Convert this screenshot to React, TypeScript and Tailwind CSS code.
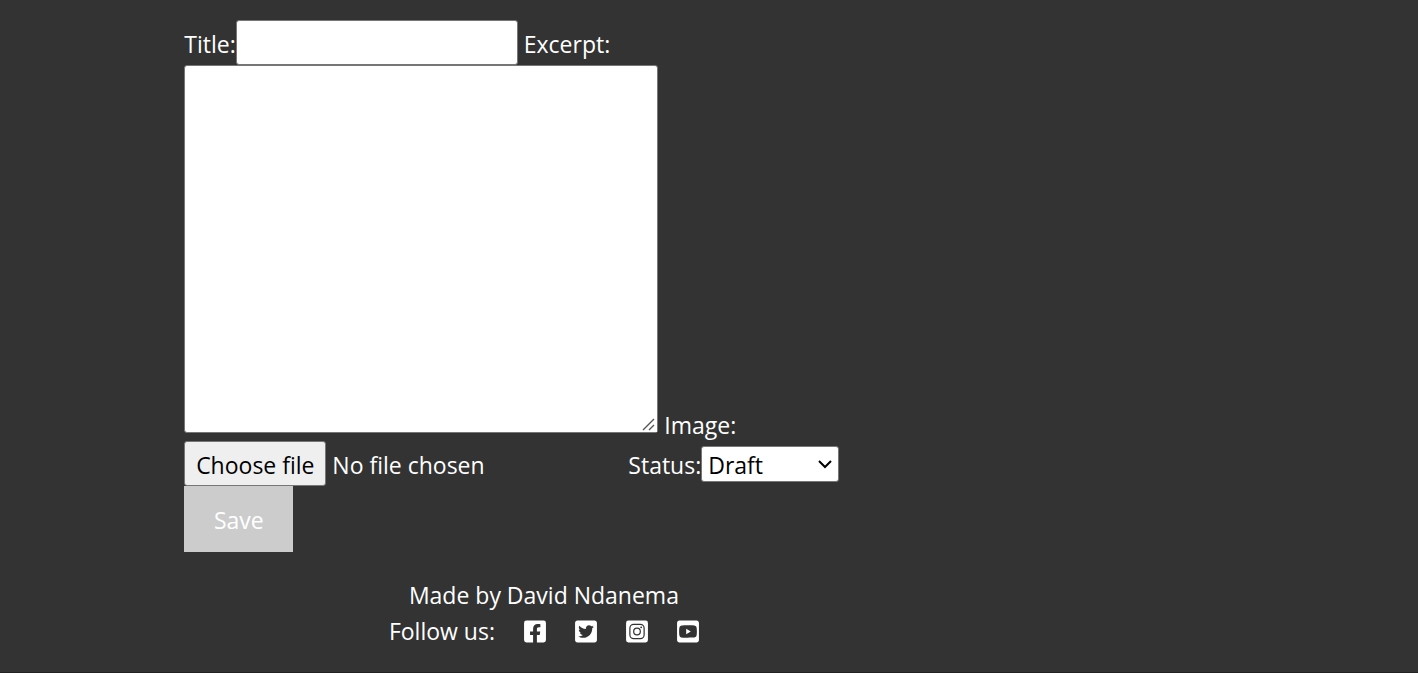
import React, { useState } from "react";
import {
  FaFacebookSquare,
  FaTwitterSquare,
  FaYoutubeSquare,
} from "react-icons/fa";

function InstagramSquare({ className }: { className?: string }) {
  return (
    <svg viewBox="0 0 448 512" className={className} aria-hidden="true">
      <rect y="32" width="448" height="448" rx="48" fill="#fff" />
      <g fill="none" stroke="#333" strokeWidth="25">
        <rect x="78" y="110" width="292" height="292" rx="78" />
        <circle cx="224" cy="256" r="68" />
      </g>
      <circle cx="309" cy="171" r="19" fill="#333" />
    </svg>
  );
}

const socials = [
  { name: "Facebook", Icon: FaFacebookSquare },
  { name: "Twitter", Icon: FaTwitterSquare },
  { name: "Instagram", Icon: InstagramSquare },
  { name: "YouTube", Icon: FaYoutubeSquare },
];

export default function App() {
  const [fileName, setFileName] = useState("No file chosen");

  return (
    <div className="min-h-screen border-b border-[#222] bg-[#333] pt-5 font-['Segoe_UI','Open_Sans',sans-serif] text-[23px] leading-9 text-white">
      <main className="ml-[13%] w-[51%] min-w-[660px]">
        <form onSubmit={(e) => e.preventDefault()}>
          <div className="flex items-center">
            <label htmlFor="title" className="pt-0.5">Title:</label>
            <input
              id="title"
              type="text"
              className="h-[45px] w-[282px] rounded-[3px] border border-[#767676] bg-white px-1 text-black"
            />
            <label htmlFor="excerpt" className="pt-0.5 pl-1.5">Excerpt:</label>
          </div>
          <div className="flex items-end">
            <div className="relative flex">
              <textarea
                id="excerpt"
                className="h-[368px] w-[474px] rounded-[3px] border border-[#767676] bg-white p-1 text-black"
              />
              <svg
                viewBox="0 0 16 16"
                className="pointer-events-none absolute right-px bottom-px size-4 bg-white"
                fill="none"
                stroke="#555"
                strokeWidth="1.4"
                aria-hidden="true"
              >
                <path d="M2 14 13 3M8 14l5-5" />
              </svg>
            </div>
            <label htmlFor="image" className="-mb-2.5 pl-1.5">Image:</label>
          </div>
          <div className="mt-2 flex items-center">
            <div className="flex w-[444px] items-center gap-1.5">
              <input
                id="image"
                type="file"
                className="sr-only"
                onChange={(e) => setFileName(e.target.files?.[0]?.name ?? "No file chosen")}
              />
              <label
                htmlFor="image"
                className="flex h-[45px] w-[142px] items-center justify-center rounded-[3px] border border-[#767676] bg-[#efefef] pt-0.5 whitespace-nowrap text-black"
              >
                Choose file
              </label>
              <span className="truncate pt-0.5">{fileName}</span>
            </div>
            <label htmlFor="status" className="pt-0.5">Status:</label>
            <div className="relative flex">
              <select
                id="status"
                className="h-9 w-[138px] appearance-none rounded-[3px] border border-[#767676] bg-white px-1.5 pt-0.5 leading-8 text-black"
              >
                <option>Draft</option>
                <option>Published</option>
              </select>
              <svg
                viewBox="0 0 16 16"
                className="pointer-events-none absolute top-2.5 right-1.5 size-4"
                fill="none"
                stroke="#000"
                strokeWidth="2"
                aria-hidden="true"
              >
                <path d="M2 5l6 6 6-6" />
              </svg>
            </div>
          </div>
          <button type="submit" className="block h-[66px] w-[109px] bg-[#ccc] pt-0.5 text-white">
            Save
          </button>
        </form>
        <footer className="flex flex-col items-center pt-[25px] pr-1">
          <p>Made by David Ndanema</p>
          <div className="flex items-center gap-[29px]">
            <span>Follow us:</span>
            {socials.map(({ name, Icon }) => (
              <a key={name} href="#" aria-label={name}>
                <Icon className="h-[25px] w-[22px]" />
              </a>
            ))}
          </div>
        </footer>
      </main>
    </div>
  );
}
